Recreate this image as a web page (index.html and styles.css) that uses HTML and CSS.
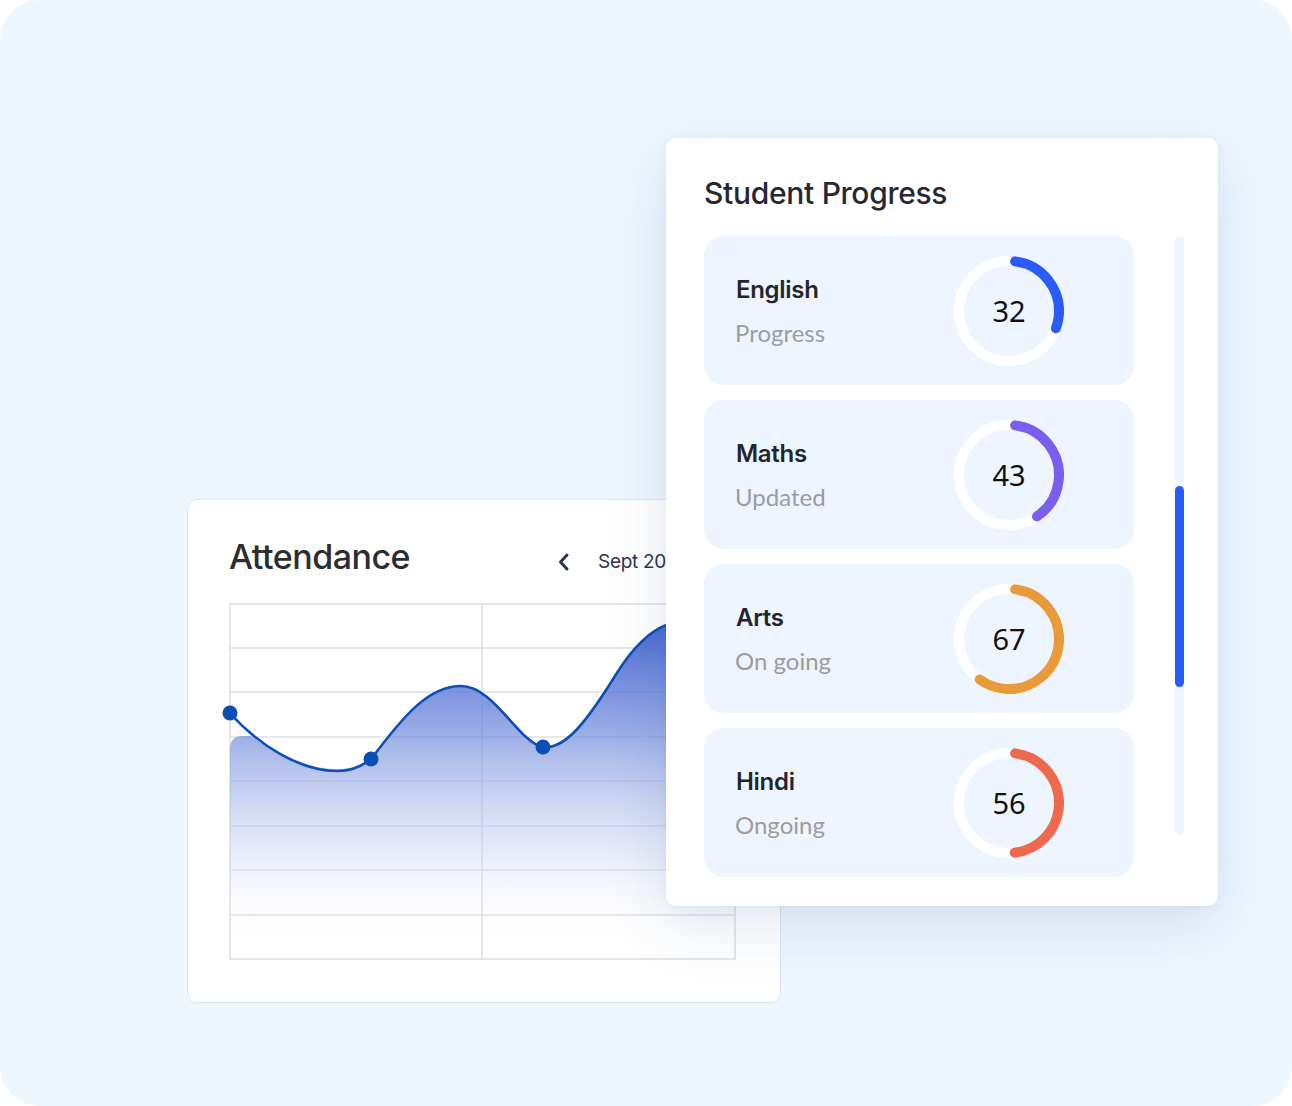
FILE: index.html
```html
<!DOCTYPE html>
<html lang="en">
<head>
<meta charset="utf-8">
<title>Dashboard</title>
<link rel="stylesheet" href="styles.css">
</head>
<body>
<div class="stage">
  <section class="attendance">
    <header class="att-head">
      <h2 class="att-title">Attendance</h2>
      <nav class="att-nav">
        <svg class="chev" width="14" height="20" viewBox="0 0 14 20"><path d="M10 3 L3.5 10 L10 17" fill="none" stroke="#2b3553" stroke-width="3" stroke-linecap="round" stroke-linejoin="round"/></svg>
        <span class="att-month">Sept 2024</span>
      </nav>
    </header>
    <svg class="chart" width="508" height="358" viewBox="0 0 508 358">
      <defs>
        <linearGradient id="fillg" x1="0" y1="0" x2="0" y2="345" gradientUnits="userSpaceOnUse">
          <stop offset="0" stop-color="#2c52cb" stop-opacity="0.95"/>
          <stop offset="0.35" stop-color="#7089dc" stop-opacity="0.75"/>
          <stop offset="0.7" stop-color="#c2cdf0" stop-opacity="0.45"/>
          <stop offset="1" stop-color="#ffffff" stop-opacity="0"/>
        </linearGradient>
      </defs>
      <g stroke="#dddfe3" stroke-width="1.6" fill="none">
        <rect x="1" y="1" width="505" height="355"/>
        <line x1="1" y1="45" x2="506" y2="45"/>
        <line x1="1" y1="89" x2="506" y2="89"/>
        <line x1="1" y1="134" x2="506" y2="134"/>
        <line x1="1" y1="178" x2="506" y2="178"/>
        <line x1="1" y1="223" x2="506" y2="223"/>
        <line x1="1" y1="267" x2="506" y2="267"/>
        <line x1="1" y1="312" x2="506" y2="312"/>
        <line x1="253" y1="1" x2="253" y2="356"/>
      </g>
      <path d="M1 356 L1 146 Q1 133 14 133 L22 133 C48 152 80 166 108 166 C125 166 135 161 143 153 C175 112 200 83 232 83 C265 83 290 140 314 144 C336 147 358 118 386 73 C405 42 422 27 440 21 C470 10 495 5 508 3 L508 356 Z" fill="url(#fillg)"/>
      <path d="M1 110 C30 143 72 168 108 168 C125 168 135 162 143 155 C175 112 200 83 232 83 C265 83 290 140 314 144 C336 147 358 118 386 73 C405 42 422 27 440 21 C470 10 495 5 508 3" fill="none" stroke="#0c4fb6" stroke-width="2.6" stroke-linecap="round"/>
      <g fill="#0a4fb5">
        <circle cx="1" cy="110" r="7.5"/>
        <circle cx="142" cy="156" r="7.5"/>
        <circle cx="314" cy="144" r="7.5"/>
      </g>
    </svg>
  </section>

  <section class="progress">
    <h2 class="prog-title">Student Progress</h2>
    <div class="prog-body">
      <div class="prog-list">
        <div class="item">
          <div class="item-text">
            <div class="item-name">English</div>
            <div class="item-sub">Progress</div>
          </div>
          <div class="ring">
            <svg width="110" height="110" viewBox="0 0 110 110"><circle cx="55" cy="55" r="50" fill="none" stroke="#fff" stroke-width="10"/><circle cx="55" cy="55" r="50" fill="none" stroke="#2a5cfb" stroke-width="10" stroke-linecap="round" stroke-dasharray="90 400" transform="rotate(-83 55 55)"/></svg>
            <span class="ring-num">32</span>
          </div>
        </div>
        <div class="item">
          <div class="item-text">
            <div class="item-name">Maths</div>
            <div class="item-sub">Updated</div>
          </div>
          <div class="ring">
            <svg width="110" height="110" viewBox="0 0 110 110"><circle cx="55" cy="55" r="50" fill="none" stroke="#fff" stroke-width="10"/><circle cx="55" cy="55" r="50" fill="none" stroke="#7a5fee" stroke-width="10" stroke-linecap="round" stroke-dasharray="121 400" transform="rotate(-83 55 55)"/></svg>
            <span class="ring-num">43</span>
          </div>
        </div>
        <div class="item">
          <div class="item-text">
            <div class="item-name">Arts</div>
            <div class="item-sub">On going</div>
          </div>
          <div class="ring">
            <svg width="110" height="110" viewBox="0 0 110 110"><circle cx="55" cy="55" r="50" fill="none" stroke="#fff" stroke-width="10"/><circle cx="55" cy="55" r="50" fill="none" stroke="#e99a3a" stroke-width="10" stroke-linecap="round" stroke-dasharray="182 400" transform="rotate(-83 55 55)"/></svg>
            <span class="ring-num">67</span>
          </div>
        </div>
        <div class="item">
          <div class="item-text">
            <div class="item-name">Hindi</div>
            <div class="item-sub">Ongoing</div>
          </div>
          <div class="ring">
            <svg width="110" height="110" viewBox="0 0 110 110"><circle cx="55" cy="55" r="50" fill="none" stroke="#fff" stroke-width="10"/><circle cx="55" cy="55" r="50" fill="none" stroke="#ef6a4c" stroke-width="10" stroke-linecap="round" stroke-dasharray="145 400" transform="rotate(-83 55 55)"/></svg>
            <span class="ring-num">56</span>
          </div>
        </div>
      </div>
      <div class="scroll-track"><div class="scroll-thumb"></div></div>
    </div>
  </section>
</div>
</body>
</html>
```

FILE: styles.css
```css
html, body {
  margin: 0;
  padding: 0;
  background: #ffffff;
}

.stage {
  position: relative;
  width: 1292px;
  height: 1106px;
  border-radius: 40px;
  background: #eef6fe;
  overflow: hidden;
}

/* Attendance card */
.attendance {
  position: absolute;
  left: 187px;
  top: 499px;
  width: 594px;
  height: 504px;
  box-sizing: border-box;
  background: #ffffff;
  border: 1.5px solid #e1e5ea;
  border-radius: 10px;
  padding: 0 0 0 41px;
  display: flex;
  flex-direction: column;
  overflow: visible;
}

.att-head {
  height: 103px;
  box-sizing: border-box;
  padding-top: 10px;
  display: flex;
  align-items: center;
  white-space: nowrap;
}

.att-title {
  margin: 0;
  font-family: Inter, "Liberation Sans", sans-serif;
  font-weight: 500;
  font-size: 34px;
  letter-spacing: -0.5px;
  color: #2d2d30;
}

.att-nav {
  display: flex;
  align-items: center;
  gap: 27px;
  margin-left: 147px;
  padding-top: 10px;
}

.chev {
  display: block;
}

.att-month {
  font-family: Inter, "Liberation Sans", sans-serif;
  font-size: 19px;
  color: #2b3553;
  letter-spacing: -0.3px;
}

.chart {
  display: block;
  overflow: visible;
}

/* Student progress card */
.progress {
  position: absolute;
  left: 666px;
  top: 138px;
  width: 552px;
  height: 768px;
  box-sizing: border-box;
  background: #ffffff;
  border-radius: 10px;
  box-shadow: 0 20px 60px rgba(40, 80, 140, 0.13), 0 2px 10px rgba(40, 80, 140, 0.05);
  padding: 37px 34px 0 38px;
  z-index: 2;
}

.prog-title {
  margin: 0;
  font-family: Inter, "Liberation Sans", sans-serif;
  font-weight: 500;
  font-size: 30px;
  line-height: 36px;
  letter-spacing: -0.3px;
  color: #252833;
}

.prog-body {
  margin-top: 25px;
  display: flex;
  gap: 41px;
}

.prog-list {
  width: 430px;
  display: flex;
  flex-direction: column;
  gap: 15px;
}

.item {
  height: 149px;
  box-sizing: border-box;
  background: #eef5fe;
  border-radius: 20px;
  padding: 0 70px 0 32px;
  display: flex;
  align-items: center;
  justify-content: space-between;
}

.item-text {
  display: flex;
  flex-direction: column;
  gap: 13px;
  padding-top: 2px;
}

.item-name {
  font-family: Inter, "Liberation Sans", sans-serif;
  font-weight: 600;
  font-size: 24px;
  line-height: 30px;
  letter-spacing: -0.3px;
  color: #22252f;
}

.item-sub {
  font-family: Lato, "Liberation Sans", sans-serif;
  font-size: 24px;
  line-height: 30px;
  color: #9c9c9f;
  margin-left: -1px;
}

.ring {
  width: 110px;
  height: 110px;
  display: grid;
  place-items: center;
}

.ring svg {
  grid-area: 1 / 1;
  display: block;
}

.ring-num {
  grid-area: 1 / 1;
  font-family: "Noto Sans", "DejaVu Sans", sans-serif;
  font-size: 29px;
  color: #111111;
}

.scroll-track {
  width: 9px;
  height: 599px;
  border-radius: 5px;
  background: #eef5fe;
  padding-top: 250px;
  box-sizing: border-box;
}

.scroll-thumb {
  height: 201px;
  border-radius: 5px;
  background: #2a5cfb;
}
```
